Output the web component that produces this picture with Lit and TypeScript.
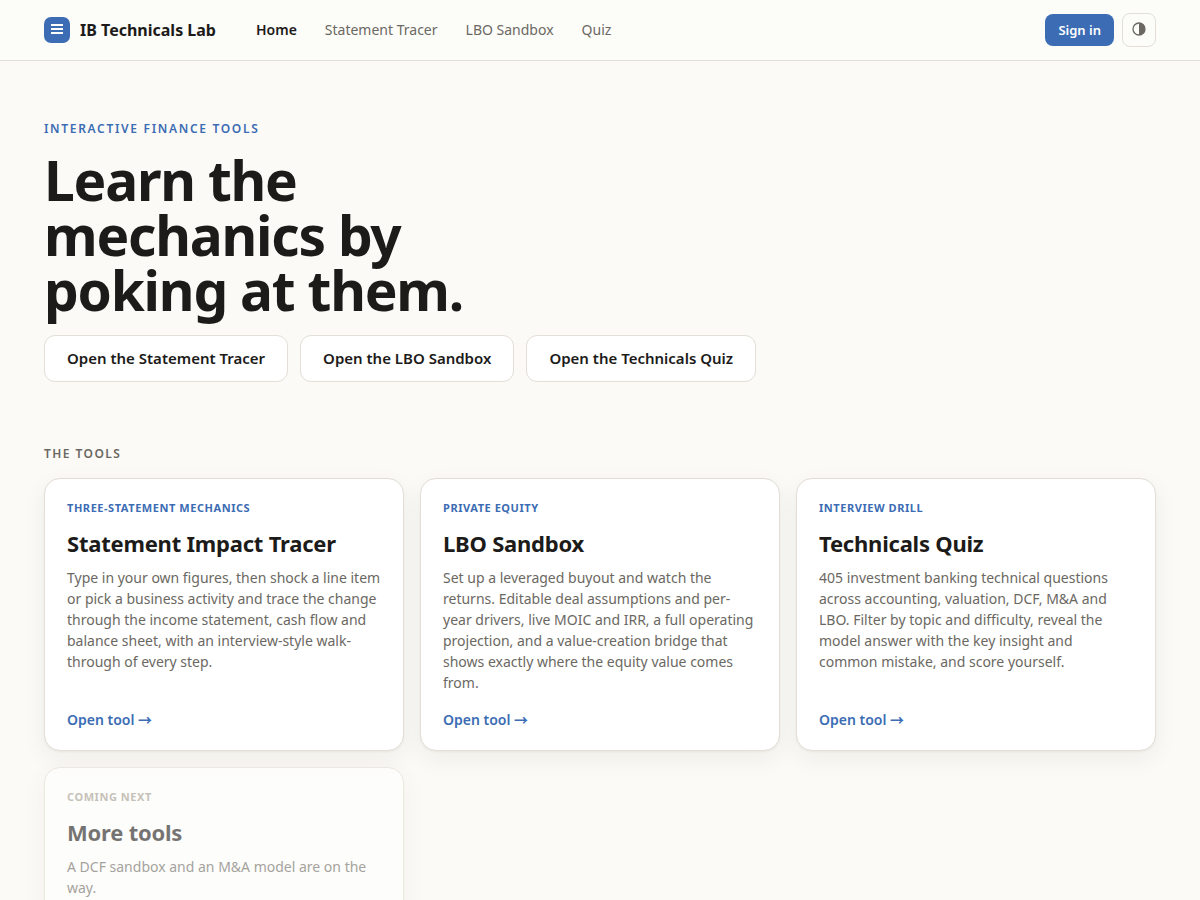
import { LitElement, html, css, nothing } from "lit";
import { customElement } from "lit/decorators.js";

interface Tool {
  tag: string;
  title: string;
  text: string;
  soon?: boolean;
}

const TOOLS: Tool[] = [
  {
    tag: "Three-statement mechanics",
    title: "Statement Impact Tracer",
    text: "Type in your own figures, then shock a line item or pick a business activity and trace the change through the income statement, cash flow and balance sheet, with an interview-style walk-through of every step.",
  },
  {
    tag: "Private equity",
    title: "LBO Sandbox",
    text: "Set up a leveraged buyout and watch the returns. Editable deal assumptions and per-year drivers, live MOIC and IRR, a full operating projection, and a value-creation bridge that shows exactly where the equity value comes from.",
  },
  {
    tag: "Interview drill",
    title: "Technicals Quiz",
    text: "405 investment banking technical questions across accounting, valuation, DCF, M&A and LBO. Filter by topic and difficulty, reveal the model answer with the key insight and common mistake, and score yourself.",
  },
  {
    tag: "Coming next",
    title: "More tools",
    text: "A DCF sandbox and an M&A model are on the way.",
    soon: true,
  },
];

@customElement("app-root")
export class AppRoot extends LitElement {
  static styles = css`
    :host {
      display: block;
      min-height: 100vh;
      background: #fbfaf6;
      color: #1c1b19;
      font-family: "Noto Sans", sans-serif;
      font-size: 14px;
      line-height: 21px;
    }
    * {
      box-sizing: border-box;
    }
    a {
      color: inherit;
      text-decoration: none;
    }
    .bar {
      background: #fcfcf9;
      border-bottom: 1px solid #e3ddd7;
    }
    .wrap {
      max-width: 1200px;
      margin: 0 auto;
      padding: 0 44px;
    }
    .bar-inner {
      display: flex;
      align-items: center;
      height: 60px;
    }
    .brand {
      display: flex;
      align-items: center;
      gap: 10px;
      font-size: 16px;
      font-weight: 700;
    }
    .logo {
      display: grid;
      place-items: center;
      width: 26px;
      height: 26px;
      border-radius: 7px;
      background: #3b6cb4;
    }
    .nav {
      display: flex;
      gap: 28px;
      margin-left: 40px;
      color: #6b6862;
      line-height: 20px;
    }
    .nav .on {
      color: #1c1b19;
      font-weight: 600;
    }
    .actions {
      display: flex;
      align-items: center;
      gap: 8px;
      margin-left: auto;
    }
    button {
      font-family: inherit;
      cursor: pointer;
    }
    .signin {
      height: 32px;
      padding: 0 13px;
      border: 0;
      border-radius: 8px;
      background: #3b6cb4;
      color: #fff;
      font-size: 13px;
      font-weight: 600;
    }
    .theme {
      display: grid;
      place-items: center;
      width: 34px;
      height: 34px;
      padding: 0 0 2px;
      border: 1px solid #e3dfd7;
      border-radius: 8px;
      background: transparent;
      color: #6b6862;
    }
    .hero {
      padding-top: 58px;
    }
    .eyebrow {
      margin: 0;
      color: #3b6cb4;
      font-size: 12px;
      font-weight: 600;
      line-height: 20px;
      letter-spacing: 0.14em;
      text-transform: uppercase;
    }
    h1 {
      max-width: 480px;
      margin: 13px 0 18px;
      font-size: 55px;
      font-weight: 700;
      line-height: 55px;
      letter-spacing: -0.022em;
    }
    .links {
      display: flex;
      flex-wrap: wrap;
      gap: 12px;
    }
    .open {
      padding: 12px 22px;
      border: 1px solid #e3dfd7;
      border-radius: 11px;
      background: #fff;
      font-size: 15px;
      font-weight: 600;
    }
    .label {
      margin: 62px 0 14px;
      color: #6b6862;
      font-size: 12px;
      font-weight: 600;
      line-height: 20px;
      letter-spacing: 0.12em;
      text-transform: uppercase;
    }
    .grid {
      display: grid;
      grid-template-columns: repeat(auto-fill, minmax(300px, 1fr));
      gap: 16px;
      padding-bottom: 64px;
    }
    .card {
      display: flex;
      flex-direction: column;
      padding: 20px 22px;
      border: 1px solid #e3dfd7;
      border-radius: 16px;
      background: #fff;
      box-shadow: 0 1px 2px rgba(40, 35, 25, 0.05), 0 8px 24px rgba(40, 35, 25, 0.06);
    }
    .tag {
      color: #3b6cb4;
      font-size: 11px;
      font-weight: 700;
      line-height: 18px;
      letter-spacing: 0.05em;
      text-transform: uppercase;
    }
    h3 {
      margin: 8px 0 6px;
      font-size: 22px;
      font-weight: 700;
      line-height: 36px;
      letter-spacing: -0.01em;
    }
    .text {
      margin: 0 0 16px;
      color: #6b6862;
    }
    .go {
      margin-top: auto;
      color: #3b6cb4;
      font-weight: 600;
    }
    .arrow {
      font-family: "Noto Sans CJK JP", sans-serif;
      line-height: 1;
    }
    .soon {
      opacity: 0.6;
    }
    .soon .tag {
      color: #a39c90;
    }
  `;

  private card(t: Tool) {
    const body = html`
      <span class="tag">${t.tag}</span>
      <h3>${t.title}</h3>
      <p class="text">${t.text}</p>
      ${t.soon ? nothing : html`<span class="go">Open tool <span class="arrow">→</span></span>`}
    `;
    return t.soon
      ? html`<div class="card soon">${body}</div>`
      : html`<a class="card" href="#">${body}</a>`;
  }

  render() {
    return html`
      <header class="bar">
        <div class="wrap bar-inner">
          <a class="brand" href="#">
            <span class="logo">
              <svg width="14" height="14" viewBox="0 0 14 14" stroke="#fff" stroke-width="2" aria-hidden="true">
                <path d="M1 2h12M1 6h12M1 10h12" />
              </svg>
            </span>
            IB Technicals Lab
          </a>
          <nav class="nav">
            <a class="on" href="#">Home</a>
            <a href="#">Statement Tracer</a>
            <a href="#">LBO Sandbox</a>
            <a href="#">Quiz</a>
          </nav>
          <div class="actions">
            <button class="signin">Sign in</button>
            <button class="theme" aria-label="Toggle theme">
              <svg width="14" height="14" viewBox="0 0 14 14" aria-hidden="true">
                <circle cx="7" cy="7" r="6" fill="none" stroke="currentColor" stroke-width="1.3" />
                <path d="M7 1a6 6 0 0 1 0 12z" fill="currentColor" />
              </svg>
            </button>
          </div>
        </div>
      </header>
      <main class="wrap">
        <section class="hero">
          <p class="eyebrow">Interactive finance tools</p>
          <h1>Learn the mechanics by poking at them.</h1>
          <div class="links">
            <a class="open" href="#">Open the Statement Tracer</a>
            <a class="open" href="#">Open the LBO Sandbox</a>
            <a class="open" href="#">Open the Technicals Quiz</a>
          </div>
        </section>
        <h2 class="label">The tools</h2>
        <div class="grid">${TOOLS.map((t) => this.card(t))}</div>
      </main>
    `;
  }
}
